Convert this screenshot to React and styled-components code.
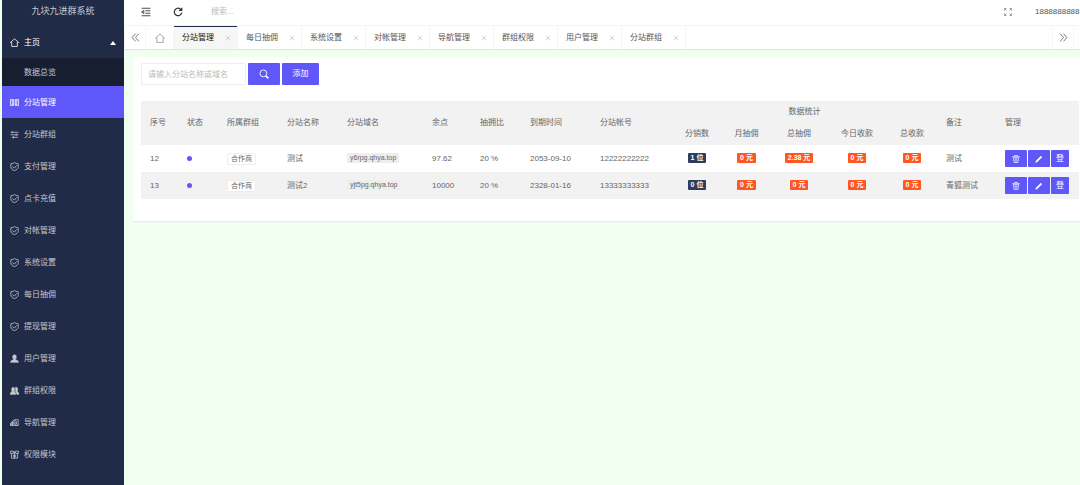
import React, { useState } from "react";
import styled, { createGlobalStyle } from "styled-components";

const tabs = [
  "分站管理",
  "每日抽佣",
  "系统设置",
  "对帐管理",
  "导航管理",
  "群组权限",
  "用户管理",
  "分站群组",
];

const menu = [
  { icon: "component", title: "分站管理" },
  { icon: "slider", title: "分站群组" },
  { icon: "shield", title: "支付管理" },
  { icon: "shield", title: "点卡充值" },
  { icon: "shield", title: "对帐管理" },
  { icon: "shield", title: "系统设置" },
  { icon: "shield", title: "每日抽佣" },
  { icon: "shield", title: "提现管理" },
  { icon: "user", title: "用户管理" },
  { icon: "group", title: "群组权限" },
  { icon: "guide", title: "导航管理" },
  { icon: "module", title: "权限模块" },
];

const widths = [37, 40, 60, 60, 85, 48, 50, 70, 81, 50, 49, 56, 60, 50, 59, 83];

const sites = [
  {
    id: 12,
    group: "合作商",
    name: "测试",
    domain: "y6rpg.qhya.top",
    points: "97.62",
    rate: "20 %",
    expires: "2053-09-10",
    account: "12222222222",
    sellers: "1 位",
    money: ["0 元", "2.38 元", "0 元", "0 元"],
    note: "测试",
  },
  {
    id: 13,
    group: "合作商",
    name: "测试2",
    domain: "yjt5pg.qhya.top",
    points: "10000",
    rate: "20 %",
    expires: "2328-01-16",
    account: "13333333333",
    sellers: "0 位",
    money: ["0 元", "0 元", "0 元", "0 元"],
    note: "青狐测试",
  },
];

const shapes = {
  home: <path d="M0 8.500 8 1.500l8 7M3 7v8h10V7" />,
  component: (
    <path d="M1 2.500h3v11H1zM12 2.500h3v11h-3zM6.500 2v12M9.500 2v12M4 4h2.500M9.500 4H12M4 12h2.500M9.500 12H12" />
  ),
  slider: <path d="M1 4h14M4 2v4M1 8.500h14M11 6.500v4M3 13h11M6 11v4" />,
  shield: (
    <path d="M8 1C6 2.500 4 3 1.500 3v6c0 3 3 5 6.500 6.500C11.500 14 14.500 12 14.500 9V3C12 3 10 2.500 8 1zM4.500 8l3 3L12 6" />
  ),
  user: (
    <path
      fill="currentColor"
      d="M8 1.500c2.500 0 3 2 3 4s-1 3-1.500 4c0 1.500 5 1.500 5.500 5H1c.5-3.500 5.500-3.500 5.500-5-.5-1-1.500-2-1.500-4s.5-4 3-4z"
    />
  ),
  group: (
    <path
      fill="currentColor"
      d="M5.500 2.500C7.500 2.500 8 4 8 6s-.5 2-1 3c0 1.500 3 2 3.500 5.500H0C.5 11 4 10.500 4 9c-.5-1-1-1.500-1-3s.5-3.500 2.500-3.500zM11 2.500c2 0 2.500 1.500 2.500 3.500s-.5 2-1 3c0 1.500 3 2 3.500 5.500h-4c0-2-1-3.500-2-4.500.5-2 .5-5.500-.5-7z"
    />
  ),
  guide: <path d="M1 13V9l4-3v7zM5 13V5l4-2v10M9 3h5.500v10H9M11.500 6v5M0 13h15M3 9v3M7 7v4" />,
  module: (
    <path d="M1 2h5v4H1zM10 2h5v4h-5zM6 3.500h4M2.500 6v8.500h11V6M8 3.500v11M5 9.500h6M5 12h6" />
  ),
  shrink: <path d="M1 2h14M7 6h8M7 10h8M1 14h14M4.500 5.500 1 8l3.500 2.500z" />,
  refresh: (
    <path strokeWidth="2" d="M13 4.500A6 6 0 1 0 14 9M14 1v4.500H9.500" />
  ),
  full: (
    <path d="M1 5V1h4M2 2l3 3M11 1h4v4M14 2l-3 3M1 11v4h4M2 14l3-3M15 11v4h-4M14 14l-3-3" />
  ),
  left: <path d="M8 1 2 8l6 7M14 1 8 8l6 7" />,
  right: <path d="m2 1 6 7-6 7M8 1l6 7-6 7" />,
  search: (
    <>
      <circle cx="7" cy="7" r="5.500" />
      <path strokeWidth="2.500" d="m11 11 4 4" />
    </>
  ),
  trash: (
    <path d="M5 3V1h6v2M0 3.500h16M2 5.500h12M3 5.500 4 15h8l1-9.500M6.500 7v6M9.500 7v6" />
  ),
  edit: <path fill="currentColor" d="m1.500 14.500 1-3 9-9 2 2-9 9z" />,
  close: <path d="m2 2 12 12M14 2 2 14" />,
};

function Icon({ name, size = 9 }) {
  return (
    <Svg viewBox="0 0 16 16" width={size} height={size} aria-hidden="true">
      {shapes[name]}
    </Svg>
  );
}

export default function App() {
  const [active, setActive] = useState("分站管理");

  return (
    <Layout>
      <GlobalStyle />
      <Sidebar>
        <Logo>九块九进群系统</Logo>
        <MenuLink href="#home" $open>
          <Icon name="home" />
          主页
          <Caret />
        </MenuLink>
        <SubLink href="#overview">数据总览</SubLink>
        {menu.map((item) => (
          <MenuLink
            key={item.title}
            href={`#${item.title}`}
            $active={item.title === "分站管理"}
          >
            <Icon name={item.icon} />
            {item.title}
          </MenuLink>
        ))}
      </Sidebar>
      <Main>
        <Header>
          <IconButton aria-label="侧边伸缩">
            <Icon name="shrink" size={10} />
          </IconButton>
          <IconButton aria-label="刷新">
            <Icon name="refresh" size={10} />
          </IconButton>
          <HeaderSearch placeholder="搜索..." aria-label="搜索" />
          <IconButton aria-label="全屏" $light>
            <Icon name="full" size={8} />
          </IconButton>
          <Account href="#account">1888888888</Account>
        </Header>
        <TabBar>
          <TabControl aria-label="向左">
            <Icon name="left" />
          </TabControl>
          <HomeTab aria-label="主页">
            <Icon name="home" size={10} />
          </HomeTab>
          {tabs.map((tab) => (
            <Tab
              key={tab}
              $active={tab === active}
              onClick={() => setActive(tab)}
            >
              {tab}
              <Icon name="close" size={6} />
            </Tab>
          ))}
          <TabControl aria-label="向右" $end>
            <Icon name="right" />
          </TabControl>
        </TabBar>
        <Card>
          <Toolbar>
            <Input
              placeholder="请输入分站名称或域名"
              aria-label="请输入分站名称或域名"
            />
            <Button aria-label="查询">
              <Icon name="search" size={10} />
            </Button>
            <Button $wide>添加</Button>
          </Toolbar>
          <Table>
            <colgroup>
              {widths.map((w, i) => (
                <Col key={i} $width={w} />
              ))}
            </colgroup>
            <thead>
              <tr>
                <th rowSpan="2">序号</th>
                <th rowSpan="2">状态</th>
                <th rowSpan="2">所属群组</th>
                <th rowSpan="2">分站名称</th>
                <th rowSpan="2">分站域名</th>
                <th rowSpan="2">余点</th>
                <th rowSpan="2">抽拥比</th>
                <th rowSpan="2">到期时间</th>
                <th rowSpan="2">分站帐号</th>
                <StatHead colSpan="5">数据统计</StatHead>
                <th rowSpan="2">备注</th>
                <th rowSpan="2">管理</th>
              </tr>
              <tr>
                <StatHead>分销数</StatHead>
                <StatHead>月抽佣</StatHead>
                <StatHead>总抽佣</StatHead>
                <StatHead>今日收款</StatHead>
                <StatHead>总收款</StatHead>
              </tr>
            </thead>
            <tbody>
              {sites.map((site) => (
                <tr key={site.id}>
                  <td>{site.id}</td>
                  <td>
                    <Dot />
                  </td>
                  <td>
                    <GroupTag>{site.group}</GroupTag>
                  </td>
                  <td>{site.name}</td>
                  <td>
                    <Domain>{site.domain}</Domain>
                  </td>
                  <td>{site.points}</td>
                  <td>{site.rate}</td>
                  <td>{site.expires}</td>
                  <td>{site.account}</td>
                  <Stat>
                    <Badge $dark>{site.sellers}</Badge>
                  </Stat>
                  {site.money.map((value, i) => (
                    <Stat key={i}>
                      <Badge>{value}</Badge>
                    </Stat>
                  ))}
                  <td>{site.note}</td>
                  <td>
                    <Actions>
                      <Action aria-label="删除">
                        <Icon name="trash" size={8} />
                      </Action>
                      <Action aria-label="编辑">
                        <Icon name="edit" size={8} />
                      </Action>
                      <Action $small>登</Action>
                    </Actions>
                  </td>
                </tr>
              ))}
            </tbody>
          </Table>
        </Card>
      </Main>
    </Layout>
  );
}

const GlobalStyle = createGlobalStyle`
  * {
    box-sizing: border-box;
  }
  body {
    margin: 0;
    background: #f0fff0;
    overflow: hidden;
  }
  body, button, input {
    font-family: "Liberation Sans", "Noto Sans CJK SC", sans-serif;
    font-size: 8px;
    line-height: 12px;
    color: #555555;
  }
  button {
    padding: 0;
    border: 0;
    background: none;
    cursor: pointer;
  }
  a {
    color: inherit;
    text-decoration: none;
  }
`;

const Svg = styled.svg`
  flex: none;
  fill: none;
  stroke: currentColor;
  stroke-width: 1.4;
`;

const Layout = styled.div`
  display: flex;
  min-height: 100vh;
  padding-left: 2px;
`;

const Sidebar = styled.nav`
  flex: none;
  width: 122px;
  background: #202b47;
  color: #c4c8d1;
  line-height: 14px;
`;

const Logo = styled.div`
  height: 26px;
  line-height: 23px;
  font-size: 9px;
  text-align: center;
`;

const MenuLink = styled.a`
  display: flex;
  align-items: center;
  gap: 5px;
  height: 32px;
  padding: 1px 8px 0;
  background: ${(props) => (props.$active ? "#5f57f8" : "none")};
  color: ${(props) => (props.$active || props.$open ? "#ffffff" : "inherit")};
`;

const SubLink = styled.a`
  display: flex;
  align-items: center;
  height: 28px;
  padding: 1px 0 0 22px;
  background: #161e2f;
`;

const Caret = styled.i`
  margin-left: auto;
  border: 3px solid transparent;
  border-top: 0;
  border-bottom: 4px solid #ffffff;
`;

const Main = styled.main`
  flex: 1;
  min-width: 0;
`;

const Header = styled.header`
  display: flex;
  align-items: center;
  height: 25px;
  padding: 0 0 1px 6px;
  background: #ffffff;
`;

const IconButton = styled.button`
  display: flex;
  flex: none;
  align-items: center;
  justify-content: center;
  width: 32px;
  height: 24px;
  color: ${(props) => (props.$light ? "#777777" : "#333333")};
`;

const HeaderSearch = styled.input`
  flex: 1;
  min-width: 0;
  margin-left: 17px;
  padding: 0;
  border: 0;
  outline: 0;
  &::placeholder {
    color: #bbbbbb;
  }
`;

const Account = styled.a`
  flex: none;
  width: 56px;
  padding-left: 11px;
  white-space: nowrap;
`;

const TabBar = styled.div`
  display: flex;
  height: 24px;
  padding-right: 6px;
  background: #ffffff;
  border-top: 1px solid #f3f3f3;
  box-shadow: 0 1px 1px rgba(0, 0, 0, 0.08);
`;

const TabControl = styled.button`
  display: flex;
  flex: none;
  align-items: center;
  justify-content: center;
  width: 22px;
  margin-left: ${(props) => (props.$end ? "auto" : "0")};
  border-right: 1px solid #f6f6f6;
  border-left: 1px solid #f6f6f6;
`;

const HomeTab = styled(TabControl)`
  width: 28px;
  border-left: 0;
  color: #999999;
`;

const Tab = styled.button`
  display: flex;
  flex: none;
  align-items: center;
  justify-content: space-between;
  width: 64px;
  padding: 0 6px 0 8px;
  border-right: 1px solid #f6f6f6;
  background: ${(props) => (props.$active ? "#f6f6f6" : "none")};
  box-shadow: ${(props) => (props.$active ? "inset 0 1px #202b47" : "none")};
  color: ${(props) => (props.$active ? "#111111" : "#555555")};
  svg {
    color: #aaaaaa;
  }
`;

const Card = styled.section`
  margin: 8px 0 0 9px;
  padding: 6px 1px 22px 8px;
  background: #ffffff;
  box-shadow: 0 1px 1px rgba(0, 0, 0, 0.05);
`;

const Toolbar = styled.div`
  display: flex;
  gap: 2px;
  margin-bottom: 16px;
`;

const Input = styled.input`
  width: 105px;
  height: 22px;
  padding: 0 6px;
  border: 1px solid #eeeeee;
  border-radius: 1px;
  &::placeholder {
    color: #bbbbbb;
  }
`;

const Button = styled.button`
  display: flex;
  align-items: center;
  justify-content: center;
  width: ${(props) => (props.$wide ? "37px" : "32px")};
  height: 22px;
  border-radius: 1px;
  background: #5f57f8;
  color: #ffffff;
`;

const Col = styled.col`
  width: ${(props) => props.$width}px;
`;

const Table = styled.table`
  width: 100%;
  table-layout: fixed;
  border-collapse: collapse;
  color: #666666;
  th,
  td {
    padding: 0 0 0 9px;
    text-align: left;
    font-weight: 400;
    white-space: nowrap;
  }
  thead {
    background: #f2f2f2;
  }
  thead tr {
    height: 22px;
  }
  tbody tr {
    height: 27px;
  }
  tbody tr:nth-child(even) {
    background: #f2f2f2;
  }
`;

const StatHead = styled.th`
  && {
    padding: 0;
    text-align: center;
  }
`;

const Stat = styled.td`
  && {
    padding: 0;
    text-align: center;
  }
`;

const Dot = styled.span`
  display: block;
  width: 5px;
  height: 5px;
  border-radius: 50%;
  background: #5f57f8;
`;

const GroupTag = styled.span`
  display: block;
  width: 29px;
  height: 12px;
  border: 1px solid #eeeeee;
  border-radius: 1px;
  background: #ffffff;
  font-size: 7px;
  line-height: 10px;
  text-align: center;
`;

const Domain = styled.span`
  display: inline-block;
  padding: 0 3px;
  background: #eeeeee;
  font-size: 7px;
  line-height: 10px;
  vertical-align: middle;
`;

const Badge = styled.span`
  display: inline-block;
  padding: 0 3px;
  border-radius: 1px;
  background: ${(props) => (props.$dark ? "#2f3c5c" : "#ff5722")};
  color: #ffffff;
  font-size: 7px;
  font-weight: 700;
  line-height: 10px;
  vertical-align: middle;
`;

const Actions = styled.div`
  display: flex;
  gap: 1px;
`;

const Action = styled.button`
  display: flex;
  align-items: center;
  justify-content: center;
  width: ${(props) => (props.$small ? "18px" : "22px")};
  height: 17px;
  border-radius: 1px;
  background: #5f57f8;
  color: #ffffff;
`;
